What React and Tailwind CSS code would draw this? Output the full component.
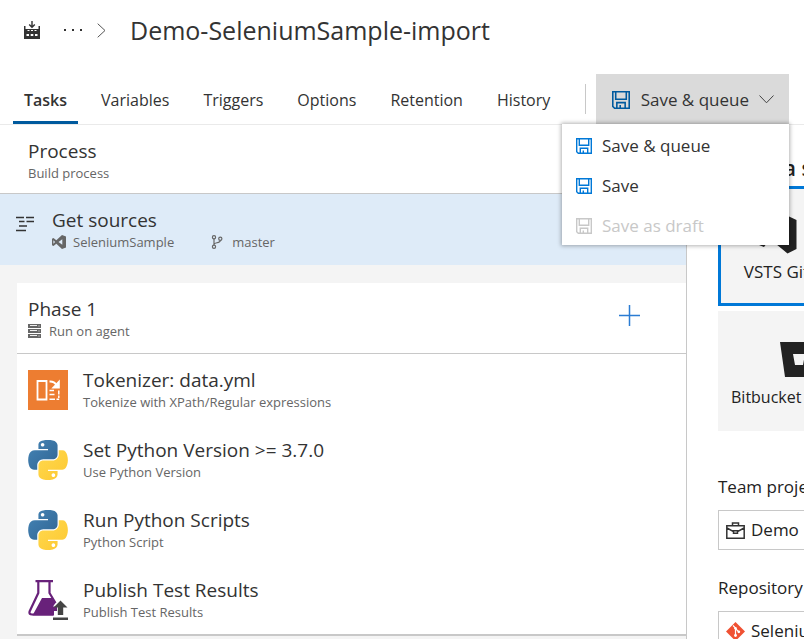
import React from "react";

const tabs = ["Tasks", "Variables", "Triggers", "Options", "Retention", "History"];

function BuildIcon() {
  return (
    <svg width="16" height="20" viewBox="0 0 16 20" className="shrink-0" aria-hidden="true">
      <path d="M8 1v6M5.200 4.500L8 7.300l2.800-2.800" fill="none" stroke="#333" strokeWidth="1.400" />
      <path d="M0 6h1.500v3H3v2h10V9h1.500V6H16v13H0z" fill="#333" />
      <path d="M3 9h10v3H3z" fill="#333" />
      <path d="M3.500 10h2v1h-2zM7 10h2v1H7zM10.500 10h2v1h-2zM2.500 14h2.500v2H2.500zM6.700 14h2.600v2H6.700zM11 14h2.500v2H11z" fill="#fff" />
    </svg>
  );
}

function SaveIcon({ size = 16, className = "" }) {
  return (
    <svg width={size} height={size} viewBox="0 0 16 16" className={"shrink-0 " + className} fill="none" stroke="currentColor" strokeWidth="1.400" aria-hidden="true">
      <path d="M.7.7h14.600v14.600H2.300L.7 13.700z" />
      <path d="M3.300.7v6.600h9.400V.7M4.300 15v-4.700h7.400V15M7.300 12.500V15" />
    </svg>
  );
}

function StepsIcon() {
  return (
    <svg width="18" height="16" viewBox="0 0 18 16" className="shrink-0" aria-hidden="true">
      <path d="M0 1.500h8M10 1.500h8M3 5.500h5.500M10.500 5.500H18M3 10h8M0 14.500h10" stroke="#333" strokeWidth="1.500" />
    </svg>
  );
}

function VisualStudioIcon() {
  return (
    <svg width="14" height="14" viewBox="0 0 14 14" className="shrink-0" aria-hidden="true">
      <path fillRule="evenodd" fill="#666" d="M10 0l4 1.500v11L10 14 4.300 8.800 1.500 11 0 10.200V3.800L1.500 3l2.800 2.200zM10.300 4.200L6.500 7l3.800 2.800zM1.400 5.300v3.400L3.100 7z" />
    </svg>
  );
}

function BranchIcon() {
  return (
    <svg width="12" height="14" viewBox="0 0 12 14" className="shrink-0" fill="none" stroke="#666" strokeWidth="1.200" aria-hidden="true">
      <circle cx="3" cy="2.300" r="1.600" />
      <circle cx="9.300" cy="3.800" r="1.600" />
      <circle cx="3" cy="11.700" r="1.600" />
      <path d="M3 4v6M9.300 5.400c0 3-6.300 1.800-6.300 4.200" />
    </svg>
  );
}

function ServerIcon() {
  return (
    <svg width="13" height="14" viewBox="0 0 13 14" className="shrink-0" aria-hidden="true">
      <path d="M0 0h13v4H0zM0 5h13v4H0zM0 10h13v4H0z" fill="#666" />
      <path d="M2 1.500h7M2 6.500h7M2 11.500h7M10.500 2h1M10.500 7h1M10.500 12h1" stroke="#fff" strokeWidth=".9" />
    </svg>
  );
}

function TokenizerIcon() {
  return (
    <svg width="40" height="40" viewBox="0 0 40 40" className="shrink-0" aria-hidden="true">
      <path d="M0 0h40v40H0z" fill="#ed7d31" />
      <g fill="none" stroke="#fff">
        <path d="M9.500 11h9v18.500h-9z" strokeWidth="1.800" />
        <path d="M21.500 11.500c3.500-.2 5.500 1 7 3.500" strokeWidth="2" />
        <path d="M21.500 20.500h4.500M21.500 24.500h5M21.500 29.200h5.500M28.500 29.200h2.700M30.800 20.500v4M30.800 25.500v2.500" strokeWidth="1.500" />
      </g>
      <path d="M31.800 9.500v9h-8.500z" fill="#fff" />
    </svg>
  );
}

function PythonIcon() {
  return (
    <svg width="40" height="40" viewBox="0 0 111 112" className="shrink-0" aria-hidden="true">
      <defs>
        <linearGradient id="pyBlue" x1="0" y1="0" x2="1" y2="1">
          <stop offset="0" stopColor="#4584b6" />
          <stop offset="1" stopColor="#2f6492" />
        </linearGradient>
        <linearGradient id="pyYellow" x1="0" y1="0" x2="1" y2="1">
          <stop offset="0" stopColor="#ffd94f" />
          <stop offset="1" stopColor="#fdc831" />
        </linearGradient>
      </defs>
      <path fill="url(#pyBlue)" d="M54.919.001c-4.584.022-8.961.413-12.813 1.095C30.760 3.099 28.700 7.295 28.700 15.032v10.219h26.813v3.406H18.638c-7.793 0-14.616 4.684-16.750 13.594-2.462 10.213-2.571 16.586 0 27.250 1.906 7.938 6.458 13.594 14.250 13.594h9.219v-12.250c0-8.850 7.657-16.656 16.750-16.656h26.781c7.455 0 13.406-6.138 13.406-13.625v-25.530c0-7.266-6.130-12.725-13.406-13.937C64.283.330 59.503-.020 54.919.001zm-14.500 8.220c2.770 0 5.031 2.298 5.031 5.125 0 2.816-2.262 5.093-5.031 5.093-2.780 0-5.032-2.277-5.032-5.093 0-2.827 2.251-5.125 5.032-5.125z" />
      <path fill="url(#pyYellow)" d="M85.638 28.657v11.906c0 9.231-7.826 17-16.750 17H42.106c-7.336 0-13.406 6.279-13.406 13.625V96.720c0 7.266 6.319 11.540 13.406 13.625 8.488 2.496 16.627 2.947 26.782 0 6.750-1.955 13.406-5.888 13.406-13.625V86.501H55.513v-3.406h40.188c7.792 0 10.696-5.435 13.406-13.594 2.799-8.399 2.680-16.476 0-27.250-1.926-7.757-5.604-13.594-13.406-13.594zm-15.063 64.656c2.780 0 5.031 2.278 5.031 5.094 0 2.827-2.251 5.125-5.031 5.125-2.770 0-5.031-2.298-5.031-5.125 0-2.816 2.261-5.094 5.031-5.094z" />
    </svg>
  );
}

function FlaskIcon() {
  return (
    <svg width="40" height="40" viewBox="0 0 40 40" className="shrink-0" aria-hidden="true">
      <path d="M7.500 1.200h17.500M10.300 1v12L1.600 31.500Q.8 34.500 4 34.500h21M21.500 1v12l6 10" fill="none" stroke="#68217a" strokeWidth="2.200" />
      <path d="M14 18h10l3.500 5-2.500 3.500h4V31h-3v4.500H4.500z" fill="#68217a" />
      <path d="M32.500 20.500l7 7h-4.300V35h-5.400v-7.500h-4.300zM25 37.500h15V40H25z" fill="#444" />
    </svg>
  );
}

function VstsLogo() {
  return (
    <svg width="40" height="44" viewBox="0 0 40 44" className="shrink-0" aria-hidden="true">
      <path fillRule="evenodd" fill="#222" d="M31 6l8.500 4v29l-9 4.500L19 34l-6-5-6 8-5-2V14l4-2 8 6zM30 16l-9 7 9 7zM5 18v10l5-5z" />
    </svg>
  );
}

function BitbucketLogo() {
  return (
    <svg width="38" height="35" viewBox="0 0 38 35" className="shrink-0" aria-hidden="true">
      <path fillRule="evenodd" fill="#222" d="M0 0h38l-5 35H5zM13 12l2 11h8l2-11z" />
    </svg>
  );
}

function BriefcaseIcon() {
  return (
    <svg width="19" height="17" viewBox="0 0 19 17" className="shrink-0" fill="none" stroke="#333" strokeWidth="1.500" aria-hidden="true">
      <path d="M.8 3.700h17.400v12.500H.8zM6.500 3.500V1h6v2.500M1 6l6.500 3.700M18 6l-6.500 3.700M7.500 8.700h4v2.600h-4z" />
    </svg>
  );
}

function GitIcon() {
  return (
    <svg width="19" height="19" viewBox="0 0 19 19" className="shrink-0" aria-hidden="true">
      <path d="M9.500 0L19 9.500 9.500 19 0 9.500z" fill="#f05133" />
      <path d="M7 3.500l2.500 2.600V14M9.500 6.500l3.300 3.300" fill="none" stroke="#fff" strokeWidth="1.200" />
      <circle cx="9.500" cy="6.300" r="1.300" fill="#fff" />
      <circle cx="9.500" cy="13.500" r="1.400" fill="#fff" />
      <circle cx="12.800" cy="9.800" r="1.400" fill="#fff" />
    </svg>
  );
}

const tasks = [
  { title: "Tokenizer: data.yml", detail: "Tokenize with XPath/Regular expressions", Icon: TokenizerIcon },
  { title: "Set Python Version >= 3.7.0", detail: "Use Python Version", Icon: PythonIcon },
  { title: "Run Python Scripts", detail: "Python Script", Icon: PythonIcon },
  { title: "Publish Test Results", detail: "Publish Test Results", Icon: FlaskIcon },
];

function Heading({ children }) {
  return <span className="block text-[19px] leading-6">{children}</span>;
}

function Detail({ children }) {
  return <span className="flex items-center text-[13px] leading-5 text-[#666]">{children}</span>;
}

function SaveMenu() {
  return (
    <div className="relative">
      <button aria-haspopup="menu" aria-expanded="true" className="flex h-[50px] items-center whitespace-nowrap bg-[#dadada] pl-4 pr-[15px] pt-px text-[17px]">
        <SaveIcon size={18} className="text-[#005a9e]" />
        <span className="ml-[11px]">Save &amp; queue</span>
        <svg width="15" height="9" viewBox="0 0 15 9" className="ml-[10px]" fill="none" stroke="#444" aria-hidden="true">
          <path d="M.5.5l7 7.300 7-7.300" />
        </svg>
      </button>
      <div role="menu" className="absolute right-0 top-full z-10 w-[227px] bg-white pb-px text-[17px] shadow-[0_0_4px_1px_rgba(0,0,0,0.3)]">
        <button role="menuitem" className="flex h-10 w-full items-center gap-[10px] pl-[14px] pt-1">
          <SaveIcon className="text-[#0078d7]" />Save &amp; queue
        </button>
        <button role="menuitem" className="flex h-10 w-full items-center gap-[10px] pl-[14px] pt-1">
          <SaveIcon className="text-[#0078d7]" />Save
        </button>
        <button role="menuitem" disabled className="flex h-10 w-full items-center gap-[10px] pl-[14px] pt-1 text-[#c8c8c8]">
          <SaveIcon className="text-[#c8c8c8]" />Save as draft
        </button>
      </div>
    </div>
  );
}

export default function App() {
  return (
    <div className="flex h-screen flex-col overflow-hidden bg-white font-['Open_Sans',sans-serif] text-[#333]">
      <header className="flex h-[74px] shrink-0 items-start pl-6 pt-3">
        <div className="flex h-9 items-center">
          <BuildIcon />
          <button aria-label="More" className="ml-6 flex gap-[6px]">
            <span className="size-[2px] bg-[#333]" />
            <span className="size-[2px] bg-[#333]" />
            <span className="size-[2px] bg-[#333]" />
          </button>
          <svg width="9" height="15" viewBox="0 0 9 15" className="ml-[15px]" fill="none" stroke="#555" aria-hidden="true">
            <path d="M.7.7l7.300 6.800L.7 14.300" />
          </svg>
          <h1 className="ml-6 whitespace-nowrap text-[25px] leading-9">Demo-SeleniumSample-import</h1>
        </div>
      </header>

      <nav className="flex h-[51px] shrink-0 items-start border-b border-[#eaeaea] pl-[13px] pr-[15px]">
        <div className="flex gap-3 text-base">
          {tabs.map((t, i) => (
            <a
              key={t}
              href="#"
              className={i === 0 ? "h-[50px] border-b-[3px] border-[#005a9e] px-[11px] font-semibold leading-[52px]" : "h-[50px] px-[11px] leading-[52px]"}
            >
              {t}
            </a>
          ))}
        </div>
        <div className="ml-auto mr-[10px] mt-[10px] h-[30px] w-px bg-[#c8c8c8]" />
        <SaveMenu />
      </nav>

      <div className="flex min-h-0 flex-1">
        <main className="min-w-0 flex-1 border-r border-[#c8c8c8] bg-[#f4f4f4]">
          <section className="h-[69px] border-b border-[#c8c8c8] bg-white pl-7 pt-[14px]">
            <Heading>Process</Heading>
            <Detail>Build process</Detail>
          </section>
          <section className="flex h-[71px] bg-[#deebf8] pl-4 pt-[14px]">
            <div className="pt-2">
              <StepsIcon />
            </div>
            <div className="ml-[18px]">
              <Heading>Get sources</Heading>
              <Detail>
                <VisualStudioIcon />
                <span className="ml-[7px]">SeleniumSample</span>
                <span className="ml-[37px] flex items-center gap-[9px]">
                  <BranchIcon />
                  master
                </span>
              </Detail>
            </div>
          </section>
          <section className="ml-[17px] mt-[18px] border-b-2 border-[#c8c8c8] bg-white">
            <div className="flex h-[71px] items-start border-b border-[#c8c8c8] pl-[11px] pr-[46px] pt-[14px]">
              <div>
                <Heading>Phase 1</Heading>
                <Detail>
                  <ServerIcon />
                  <span className="ml-2">Run on agent</span>
                </Detail>
              </div>
              <button aria-label="Add task" className="ml-auto mt-2">
                <svg width="21" height="21" viewBox="0 0 21 21" stroke="#2b7cd3" strokeWidth="1.500" aria-hidden="true">
                  <path d="M10.500 0v21M0 10.500h21" />
                </svg>
              </button>
            </div>
            <ul>
              {tasks.map(({ title, detail, Icon }) => (
                <li key={title} className="flex h-[70px] items-start gap-[15px] pl-[11px] pt-4">
                  <Icon />
                  <div className="-mt-[2px]">
                    <Heading>{title}</Heading>
                    <Detail>{detail}</Detail>
                  </div>
                </li>
              ))}
            </ul>
          </section>
        </main>

        <aside className="w-[117px] shrink-0 overflow-hidden pl-[31px] pt-[31px] text-[17px] text-[#222] xl:w-[480px]">
          <h2 className="whitespace-nowrap text-[21px] font-semibold leading-6">Select a source</h2>
          <div className="mt-[6px] flex flex-col gap-[5px]">
            <button className="flex h-[120px] w-[117px] flex-col items-center border-[3px] border-[#0078d7] bg-[#f4f4f4] pt-[21px]">
              <VstsLogo />
              <span className="mt-[6px] whitespace-nowrap leading-6">VSTS Git</span>
            </button>
            <button className="flex h-[120px] w-[162px] flex-col items-center bg-[#f4f4f4] pt-[31px]">
              <BitbucketLogo />
              <span className="mt-2 w-[136px] whitespace-nowrap text-left text-base leading-6">Bitbucket Cloud</span>
            </button>
          </div>
          <label htmlFor="project" className="mt-11 block whitespace-nowrap leading-6">Team project</label>
          <div className="mt-[11px] flex h-10 w-[300px] items-center border border-[#c8c8c8] pl-[7px]">
            <BriefcaseIcon />
            <select id="project" className="ml-[6px] flex-1 appearance-none bg-transparent outline-none">
              <option>Demo</option>
            </select>
          </div>
          <label htmlFor="repository" className="mt-[26px] block whitespace-nowrap leading-6">Repository</label>
          <div className="mt-[11px] flex h-10 w-[300px] items-center border border-[#c8c8c8] pl-[7px]">
            <GitIcon />
            <select id="repository" className="ml-[6px] flex-1 appearance-none bg-transparent outline-none">
              <option>SeleniumSample</option>
            </select>
          </div>
        </aside>
      </div>
    </div>
  );
}
